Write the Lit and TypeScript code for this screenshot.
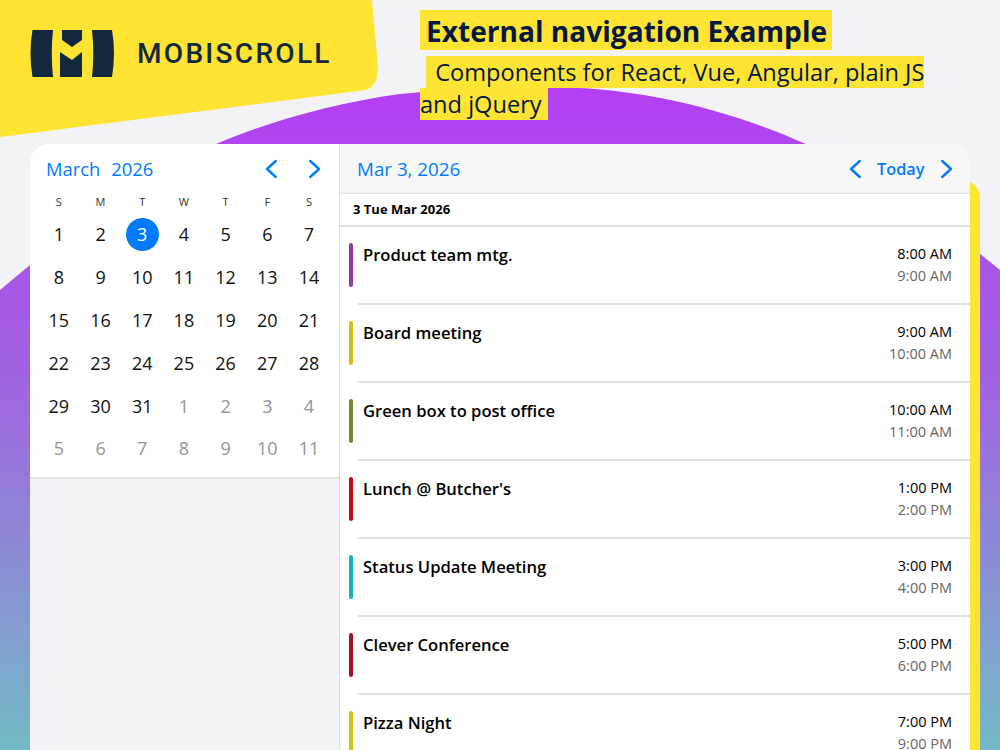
import { LitElement, html, css } from "lit";
import { customElement } from "lit/decorators.js";

const EVENTS = [
  ["Product team mtg.", "8:00 AM", "9:00 AM", "#9239a6"],
  ["Board meeting", "9:00 AM", "10:00 AM", "#d4bd12"],
  ["Green box to post office", "10:00 AM", "11:00 AM", "#78872e"],
  ["Lunch @ Butcher's", "1:00 PM", "2:00 PM", "#c40a0a"],
  ["Status Update Meeting", "3:00 PM", "4:00 PM", "#0fb3c4"],
  ["Clever Conference", "5:00 PM", "6:00 PM", "#a80f1c"],
  ["Pizza Night", "7:00 PM", "9:00 PM", "#d9bd12"],
];
const WEEKS = [
  [1, 2, 3, 4, 5, 6, 7],
  [8, 9, 10, 11, 12, 13, 14],
  [15, 16, 17, 18, 19, 20, 21],
  [22, 23, 24, 25, 26, 27, 28],
  [29, 30, 31, 1, 2, 3, 4],
  [5, 6, 7, 8, 9, 10, 11],
];
const chevron = (dir: "l" | "r") => html`<svg class="chev" viewBox="0 0 14 20" width="14" height="20">
  <path d=${dir === "l" ? "M11.8 2 L3 10 L11.8 18" : "M2.2 2 L11 10 L2.2 18"} fill="none" stroke="#007bff" stroke-width="2.4" stroke-linecap="round" stroke-linejoin="round"></path>
</svg>`;

@customElement("app-root")
export class AppRoot extends LitElement {
  static styles = css`
    :host {
      display: block;
      position: relative;
      width: 1000px;
      height: 750px;
      overflow: hidden;
      background: #f2f2f7;
      font-family: "Open Sans", "Noto Sans", sans-serif;
      color: #000;
    }
    .decor { position: absolute; left: 0; top: 0; }
    .page { position: relative; display: flex; flex-direction: column; }
    .top { display: flex; height: 144px; }
    .brand { width: 420px; display: flex; align-items: flex-start; padding: 29px 0 0 30px; box-sizing: border-box; gap: 22px; }
    .brand-name { font-family: "Roboto", sans-serif; font-size: 28px; line-height: 49px; letter-spacing: 2.3px; color: #12283f; font-weight: 500; }
    .titles { width: 520px; padding-top: 10px; color: #04173f; }
    .t1 { margin: 0; font-size: 28.1px; line-height: 42px; height: 40px; font-weight: 700; }
    .t1 .mark { display: inline-block; height: 40px; padding: 0 5px 0 6px; }
    .t2 { margin: 6px 0 0; font-size: 23.6px; line-height: 32px; font-weight: 500; }
    .mark { background: #ffe433; }
    .t2 .mark { margin-left: 6px; padding-left: 3px; }
    .card-wrap { position: relative; margin: 0 20px 0 30px; }
    .stripe { position: absolute; right: 0; top: 36px; bottom: -100px; width: 40px; background: #ffe433; border-radius: 0 18px 0 0; }
    .card { position: relative; display: flex; width: 940px; height: 700px; border-radius: 20px 20px 0 0; overflow: hidden; background: #f1f1f6; }
    .cal { width: 309px; height: 335px; box-sizing: border-box; background: #fff; border-bottom: 2px solid #e3e3e6; flex: none; }
    .cal-head { display: flex; align-items: center; height: 50px; padding: 0 17px 0 16px; }
    .cal-title { flex: 1; color: #007bff; font-size: 18.4px; line-height: 48px; word-spacing: 6px; }
    .cal-nav { display: flex; gap: 30px; }
    .chev { display: block; }
    .grid { display: grid; grid-template-columns: repeat(7, 41.7px); padding-left: 8px; }
    .dow { height: 19px; font-size: 11px; line-height: 16px; text-align: center; color: #333; }
    .day { height: 42.8px; display: flex; align-items: center; justify-content: center; font-size: 18px; color: #111; }
    .day.other { color: #949494; }
    .day.sel span { display: flex; width: 33px; height: 33px; align-items: center; justify-content: center; border-radius: 50%; background: #007bff; color: #fff; }
    .main { flex: 1; background: #fff; border-left: 1px solid #dedede; }
    .main-head { display: flex; align-items: center; height: 49px; background: #f7f7f7; border-bottom: 1px solid #dedede; padding: 0 16px 0 17px; }
    .main-title { flex: 1; color: #007bff; font-size: 18.8px; }
    .main-nav { display: flex; align-items: center; gap: 15.5px; color: #007bff; font-size: 16.3px; font-weight: 600; }
    .day-head { height: 31px; border-bottom: 2px solid #e0e0e0; padding-left: 13px; font-size: 13px; font-weight: 700; line-height: 31px; }
    .ev { position: relative; box-sizing: border-box; height: 78px; padding: 16px 18px 0 23px; display: flex; justify-content: space-between; }
    .ev::after { content: ""; position: absolute; left: 18px; right: 0; bottom: 0; height: 2px; background: #e0e0e0; }
    .bar { position: absolute; left: 9px; top: 16px; width: 4px; height: 44px; border-radius: 2px; }
    .ev-title { font-size: 16.6px; line-height: 24px; font-weight: 600; }
    .ev-time { text-align: right; font-size: 14.5px; line-height: 22px; }
    .ev-time div + div { color: #666; }
  `;

  render() {
    return html`
      <svg class="decor" width="1000" height="750" viewBox="0 0 1000 750">
        <defs>
          <linearGradient id="g" x1="0" y1="0" x2="0" y2="1">
            <stop offset="0" stop-color="#b33ff2"></stop>
            <stop offset="0.45" stop-color="#a064e0"></stop>
            <stop offset="1" stop-color="#73bac6"></stop>
          </linearGradient>
        </defs>
        <path d="M0 290 C65 236 140 175 216 144 C270 121 335 103 400 94 C450 89 500 87 546 87 C640 87 730 110 806 144 C880 177 945 225 1000 270 L1000 750 L0 750 Z" fill="url(#g)"></path>
        <path d="M0 0 L372 0 L378 68 Q378 85 366 90 L0 137 Z" fill="#ffe433"></path>
      </svg>
      <div class="page">
        <div class="top">
          <div class="brand">
            <svg width="85" height="48" viewBox="0 0 85 48">
              <path d="M2.5 1 H23 Q20.5 24 23 48 H2.5 Q-1.5 24 2.5 1 Z" fill="#12283f"></path>
              <path d="M82 1 H62 Q64.5 24 62 48 H82 Q86 24 82 1 Z" fill="#12283f"></path>
              <path d="M32 1 H52 V11 L42 18 L32 11 Z M30 23 L42 31 L52 23 V48 H30 Z" fill="#12283f"></path>
            </svg>
            <div class="brand-name">MOBISCROLL</div>
          </div>
          <div class="titles">
            <h1 class="t1"><span class="mark">External navigation Example</span></h1>
            <p class="t2"><span class="mark">&nbsp;Components for React, Vue, Angular, plain JS and jQuery&nbsp;</span></p>
          </div>
        </div>
        <div class="card-wrap">
          <div class="stripe"></div>
          <div class="card">
            <div class="cal">
              <div class="cal-head">
                <div class="cal-title">March 2026</div>
                <div class="cal-nav">${chevron("l")}${chevron("r")}</div>
              </div>
              <div class="grid">
                ${["S", "M", "T", "W", "T", "F", "S"].map((d) => html`<div class="dow">${d}</div>`)}
                ${WEEKS.map((w, wi) =>
                  w.map((d) => {
                    const other = (wi === 4 && d < 10) || wi === 5;
                    const sel = wi === 0 && d === 3;
                    return html`<div class="day ${other ? "other" : ""} ${sel ? "sel" : ""}"><span>${d}</span></div>`;
                  })
                )}
              </div>
            </div>
            <div class="main">
              <div class="main-head">
                <div class="main-title">Mar 3, 2026</div>
                <div class="main-nav">${chevron("l")}<span>Today</span>${chevron("r")}</div>
              </div>
              <div class="day-head">3 Tue Mar 2026</div>
              ${EVENTS.map(
                (e) => html`<div class="ev">
                  <div class="bar" style="background:${e[3]}"></div>
                  <div class="ev-title">${e[0]}</div>
                  <div class="ev-time"><div>${e[1]}</div><div>${e[2]}</div></div>
                </div>`
              )}
            </div>
          </div>
        </div>
      </div>
    `;
  }
}
